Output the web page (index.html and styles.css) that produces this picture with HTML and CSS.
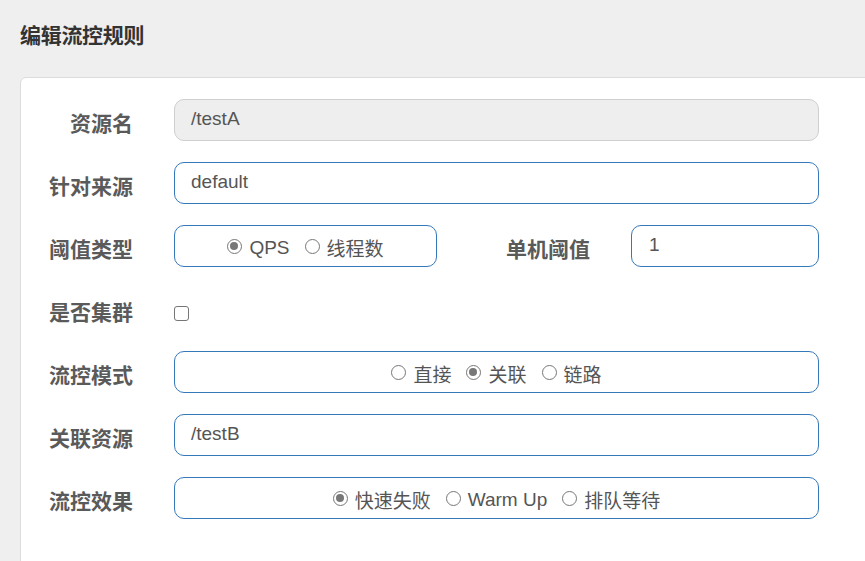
FILE: index.html
```html
<!DOCTYPE html>
<html lang="zh">
<head>
<meta charset="utf-8">
<title>编辑流控规则</title>
<link rel="stylesheet" href="styles.css">
</head>
<body>
<div class="page">
  <h1 class="title">编辑流控规则</h1>
  <div class="panel">
    <div class="row">
      <label class="label">资源名</label>
      <div class="field"><div class="input disabled">/testA</div></div>
    </div>
    <div class="row">
      <label class="label">针对来源</label>
      <div class="field"><div class="input">default</div></div>
    </div>
    <div class="row">
      <label class="label">阈值类型</label>
      <div class="field split">
        <div class="box radios narrow">
          <span class="opt"><span class="radio checked"></span>QPS</span>
          <span class="opt"><span class="radio"></span>线程数</span>
        </div>
        <label class="label sub">单机阈值</label>
        <div class="input small">1</div>
      </div>
    </div>
    <div class="row check-row">
      <label class="label">是否集群</label>
      <div class="field"><span class="checkbox"></span></div>
    </div>
    <div class="row">
      <label class="label">流控模式</label>
      <div class="field">
        <div class="box radios">
          <span class="opt"><span class="radio"></span>直接</span>
          <span class="opt"><span class="radio checked"></span>关联</span>
          <span class="opt"><span class="radio"></span>链路</span>
        </div>
      </div>
    </div>
    <div class="row">
      <label class="label">关联资源</label>
      <div class="field"><div class="input">/testB</div></div>
    </div>
    <div class="row">
      <label class="label">流控效果</label>
      <div class="field">
        <div class="box radios">
          <span class="opt"><span class="radio checked"></span>快速失败</span>
          <span class="opt"><span class="radio"></span>Warm Up</span>
          <span class="opt"><span class="radio"></span>排队等待</span>
        </div>
      </div>
    </div>
  </div>
</div>
</body>
</html>
```

FILE: styles.css
```css
* { box-sizing: border-box; }
html, body {
  margin: 0;
  padding: 0;
  background: #efefef;
  overflow: hidden;
  font-family: "Liberation Sans", Arial, "Noto Sans CJK SC", sans-serif;
  color: #555;
}
.page {
  width: 865px;
  height: 561px;
  overflow: hidden;
}
.title {
  margin: 0;
  padding: 22px 0 0 20px;
  height: 50px;
  font-size: 21px;
  line-height: 28px;
  font-weight: bold;
  color: #333;
  letter-spacing: -0.3px;
}
.panel {
  margin: 27px 0 0 20px;
  width: 900px;
  height: 520px;
  background: #fff;
  border: 1px solid #dcdcdc;
  border-radius: 6px 0 0 0;
  padding: 21px 0 0 0;
}
.row {
  display: grid;
  grid-template-columns: 112px 645px;
  column-gap: 41px;
  align-items: center;
  height: 42px;
  margin-bottom: 21px;
}
.check-row {
  padding-top: 8px;
}
.label {
  text-align: right;
  font-size: 21px;
  font-weight: bold;
  color: #5a5a5a;
  white-space: nowrap;
  padding-top: 3px;
}
.check-row .label {
  padding-top: 0;
  margin-top: -5px;
}
.field {
  display: flex;
  align-items: center;
  height: 42px;
}
.check-row .field { height: 34px; }
.input, .box {
  height: 42px;
  border: 1px solid #3579bb;
  border-radius: 10px;
  background: #fff;
  font-size: 19px;
  color: #555;
  display: flex;
  align-items: center;
}
.input {
  width: 100%;
  padding-left: 16px;
  padding-bottom: 2px;
}
.input.disabled {
  background: #eee;
  border-color: #cfcfcf;
}
.box {
  width: 100%;
  justify-content: center;
  gap: 15px;
  padding-top: 3px;
}
.box.narrow {
  width: 263px;
  flex: none;
}
.split .label.sub {
  flex: 1;
  margin-right: 41px;
}
.input.small {
  width: 188px;
  flex: none;
  padding-left: 17px;
}
.opt {
  display: inline-flex;
  align-items: center;
  gap: 7px;
  font-size: 19px;
  color: #555;
}
.radio {
  width: 15px;
  height: 15px;
  border: 1.5px solid #777;
  border-radius: 50%;
  background: #fff;
  position: relative;
  flex: none;
  margin-top: -3px;
}
.radio.checked::after {
  content: "";
  position: absolute;
  left: 2px;
  top: 2px;
  width: 8px;
  height: 8px;
  border-radius: 50%;
  background: #777;
}
.checkbox {
  width: 15px;
  height: 15px;
  border: 1.5px solid #767676;
  border-radius: 3px;
  background: #fff;
  display: inline-block;
}
```
